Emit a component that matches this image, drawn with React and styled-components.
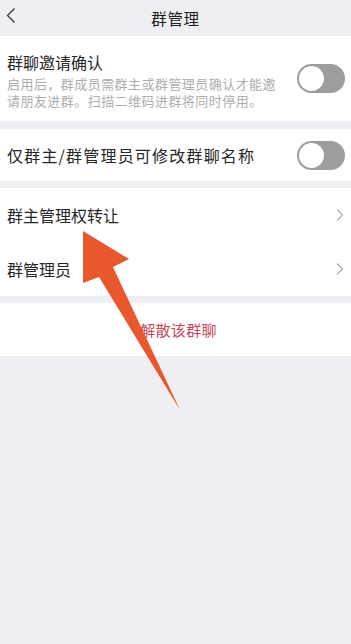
import React from "react";
import styled, { createGlobalStyle } from "styled-components";

const GlobalStyle = createGlobalStyle`
  html, body {
    margin: 0;
    padding: 0;
    background: #efeef3;
  }

  body {
    font-family: "Noto Sans CJK SC", "Noto Sans", sans-serif;
  }
`;

const Page = styled.div`
  position: relative;
  width: 351px;
  height: 644px;
  overflow: hidden;
  background: #efeef3;
`;

const Header = styled.div`
  height: 36px;
  display: flex;
  align-items: center;
  justify-content: center;
  position: relative;
  background: #efeef3;
`;

const Back = styled.div`
  position: absolute;
  left: 5px;
  top: 7px;
  display: flex;
`;

const Title = styled.div`
  font-size: 15.5px;
  color: #1b1b1b;
  letter-spacing: 0.6px;
`;

const Section = styled.div`
  background: #ffffff;
  margin-bottom: ${(p) => p.gap || 8}px;
`;

const Row = styled.div`
  height: ${(p) => p.h}px;
  display: flex;
  align-items: center;
  justify-content: space-between;
  padding: 0 6px 0 7px;
  box-sizing: border-box;
`;

const TextCol = styled.div`
  display: flex;
  flex-direction: column;
  padding-top: 3px;
`;

const Label = styled.div`
  font-size: 16px;
  color: #262626;
  line-height: 22px;
  letter-spacing: ${(p) => p.spacing || 0}px;
`;

const Hint = styled.div`
  margin-top: 2px;
  font-size: 13px;
  line-height: 17px;
  color: #adadad;
  letter-spacing: 0.45px;
  white-space: nowrap;
`;

const Toggle = styled.div`
  width: 48px;
  height: 29px;
  border-radius: 15px;
  background: #9d9d9d;
  position: relative;
  flex-shrink: 0;

  &::after {
    content: "";
    position: absolute;
    left: 2px;
    top: 2px;
    width: 25px;
    height: 25px;
    border-radius: 50%;
    background: #ffffff;
  }
`;

const Danger = styled.div`
  height: 53px;
  display: flex;
  align-items: center;
  justify-content: center;
  padding-left: 6px;
  font-size: 15px;
  color: #c4475a;
  letter-spacing: 0.3px;
`;

const Arrow = styled.svg`
  position: absolute;
  left: 0;
  top: 0;
  pointer-events: none;
`;

const Chevron = () => (
  <svg width="10" height="14" viewBox="0 0 10 14">
    <path d="M2 1.5 L7.5 7 L2 12.5" fill="none" stroke="#ababab" strokeWidth="1.2" />
  </svg>
);

export default function App() {
  return (
    <Page>
      <GlobalStyle />
      <Header>
        <Back>
          <svg width="12" height="17" viewBox="0 0 12 17">
            <path d="M9.5 1.5 L2.5 8.5 L9.5 15.5" fill="none" stroke="#333" strokeWidth="1.3" />
          </svg>
        </Back>
        <Title>群管理</Title>
      </Header>

      <Section>
        <Row h={85}>
          <TextCol>
            <Label>群聊邀请确认</Label>
            <Hint>
              启用后，群成员需群主或群管理员确认才能邀
              <br />
              请朋友进群。扫描二维码进群将同时停用。
            </Hint>
          </TextCol>
          <Toggle />
        </Row>
      </Section>

      <Section gap={7}>
        <Row h={52}>
          <Label spacing={1.2}>仅群主/群管理员可修改群聊名称</Label>
          <Toggle />
        </Row>
      </Section>

      <Section gap={7}>
        <Row h={54}>
          <Label>群主管理权转让</Label>
          <Chevron />
        </Row>
        <Row h={54}>
          <Label>群管理员</Label>
          <Chevron />
        </Row>
      </Section>

      <Section>
        <Danger>解散该群聊</Danger>
      </Section>

      <Arrow width="351" height="644" viewBox="0 0 351 644">
        <polygon
          points="83,231 129,259 113,267 180,410 99,277 83,283"
          fill="#e9582c"
        />
      </Arrow>
    </Page>
  );
}
